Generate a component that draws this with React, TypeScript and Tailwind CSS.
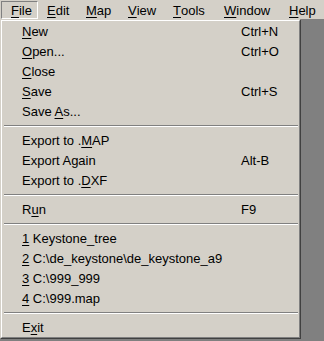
import React from 'react'

type Item = { label: React.ReactNode; shortcut?: string } | 'sep'

// accelerator letter
const U = ({ children }: { children: React.ReactNode }) => (
  <span className="underline decoration-1 underline-offset-[2px]">{children}</span>
)

const bar: { label: React.ReactNode; w: string; pressed?: boolean }[] = [
  { label: <><U>F</U>ile</>, w: 'w-[37px]', pressed: true },
  { label: <><U>E</U>dit</>, w: 'w-[39px]' },
  { label: <><U>M</U>ap</>, w: 'w-[42px]' },
  { label: <><U>V</U>iew</>, w: 'w-[45px]' },
  { label: <><U>T</U>ools</>, w: 'w-[51px]' },
  { label: <><U>W</U>indow</>, w: 'w-[65px]' },
  { label: <><U>H</U>elp</>, w: 'w-[40px]' },
]

const items: Item[] = [
  { label: <><U>N</U>ew</>, shortcut: 'Ctrl+N' },
  { label: <><U>O</U>pen...</>, shortcut: 'Ctrl+O' },
  { label: <><U>C</U>lose</> },
  { label: <><U>S</U>ave</>, shortcut: 'Ctrl+S' },
  { label: <>Save <U>A</U>s...</> },
  'sep',
  { label: <>Export to .<U>M</U>AP</> },
  { label: <>Export Again</>, shortcut: 'Alt-B' },
  { label: <>Export to .<U>D</U>XF</> },
  'sep',
  { label: <>R<U>u</U>n</>, shortcut: 'F9' },
  'sep',
  { label: <><U>1</U> Keystone_tree</> },
  { label: <><U>2</U> C:\de_keystone\de_keystone_a9</> },
  { label: <><U>3</U> C:\999_999</> },
  { label: <><U>4</U> C:\999.map</> },
  'sep',
  { label: <>E<U>x</U>it</> },
]

export default function App() {
  return (
    <div className="w-[324px] h-[341px] bg-[#808080] flex flex-col overflow-hidden font-['Liberation_Sans',Arial,sans-serif] text-[13px] text-black leading-none">
      {/* menu bar */}
      <div className="h-[19px] bg-[#d4d0c8] flex pt-[1px] pl-[1px] shrink-0">
        {bar.map((b, i) => (
          <div
            key={i}
            className={
              b.w +
              ' h-[18px] flex items-center pl-[9px] whitespace-nowrap ' +
              (b.pressed ? 'border border-t-[#808080] border-l-[#808080] border-b-white border-r-white pl-[8px]' : '')
            }
          >
            {b.label}
          </div>
        ))}
      </div>

      {/* dropdown */}
      <div className="flex">
        <div className="w-[301px] border border-t-[#d4d0c8] border-l-[#d4d0c8] border-r-[#404040] border-b-[#404040]">
          <div className="bg-[#d4d0c8] border border-t-white border-l-white border-r-[#808080] border-b-[#808080] flex flex-col">
            {items.map((it, i) =>
              it === 'sep' ? (
                <div key={i} className="h-[9px] flex flex-col justify-center pl-[2px] pr-[1px]">
                  <div className="h-[1px] bg-[#808080]" />
                  <div className="h-[1px] bg-white" />
                </div>
              ) : (
                <div key={i} className="h-[20px] flex items-center pl-[20px] whitespace-nowrap">
                  <span className="w-[219px]">{it.label}</span>
                  {it.shortcut && <span>{it.shortcut}</span>}
                </div>
              )
            )}
          </div>
        </div>
      </div>
    </div>
  )
}
